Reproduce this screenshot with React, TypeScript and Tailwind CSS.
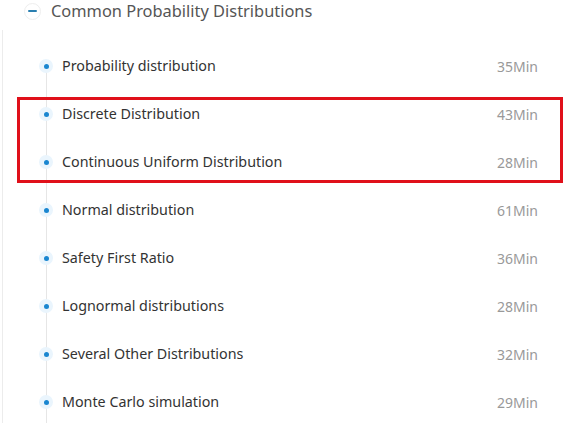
const lessons = [
  { title: "Probability distribution", time: "35Min" },
  { title: "Discrete Distribution", time: "43Min" },
  { title: "Continuous Uniform Distribution", time: "28Min" },
  { title: "Normal distribution", time: "61Min" },
  { title: "Safety First Ratio", time: "36Min" },
  { title: "Lognormal distributions", time: "28Min" },
  { title: "Several Other Distributions", time: "32Min" },
  { title: "Monte Carlo simulation", time: "29Min" },
];

function Row({ title, time }: { title: string; time: string }) {
  return (
    <li className="flex h-[48px] items-center pr-[44px]">
      <span className="relative z-10 ml-[38px] flex h-[14px] w-[14px] items-center justify-center rounded-full bg-[#eaf5fd]">
        <span className="h-[5px] w-[5px] rounded-full bg-[#1a86d0]" />
      </span>
      <span className="ml-[9px] flex-1 text-[14.3px] text-[#333]">{title}</span>
      <span className="text-[14px] text-[#999]">{time}</span>
    </li>
  );
}

export default function App() {
  return (
    <div
      className="relative h-[423px] w-[582px] overflow-hidden bg-white"
      style={{ fontFamily: '"Noto Sans", "Open Sans", sans-serif' }}
    >
      <div className="flex h-[22px] items-center pl-[24px]">
        <span className="flex h-[17px] w-[17px] items-center justify-center rounded-full border border-[#eee]">
          <span className="h-[2px] w-[9px] rounded bg-[#2a7fb0]" />
        </span>
        <span className="ml-[10px] text-[16.4px] text-[#555]">Common Probability Distributions</span>
      </div>

      <div className="relative ml-[2px] mt-[8px] h-full border-l border-[#ececec]">
        <div className="absolute bottom-0 left-[43px] top-[37px] w-px bg-[#e6e6e6]" />
        <ul className="relative -ml-[2px] pt-[12px]">
          {lessons.map((l) => (
            <Row key={l.title} title={l.title} time={l.time} />
          ))}
        </ul>
      </div>

      <div className="absolute left-[17px] top-[97px] h-[86px] w-[546px] border-[3px] border-[#e0101a]" />
    </div>
  );
}
